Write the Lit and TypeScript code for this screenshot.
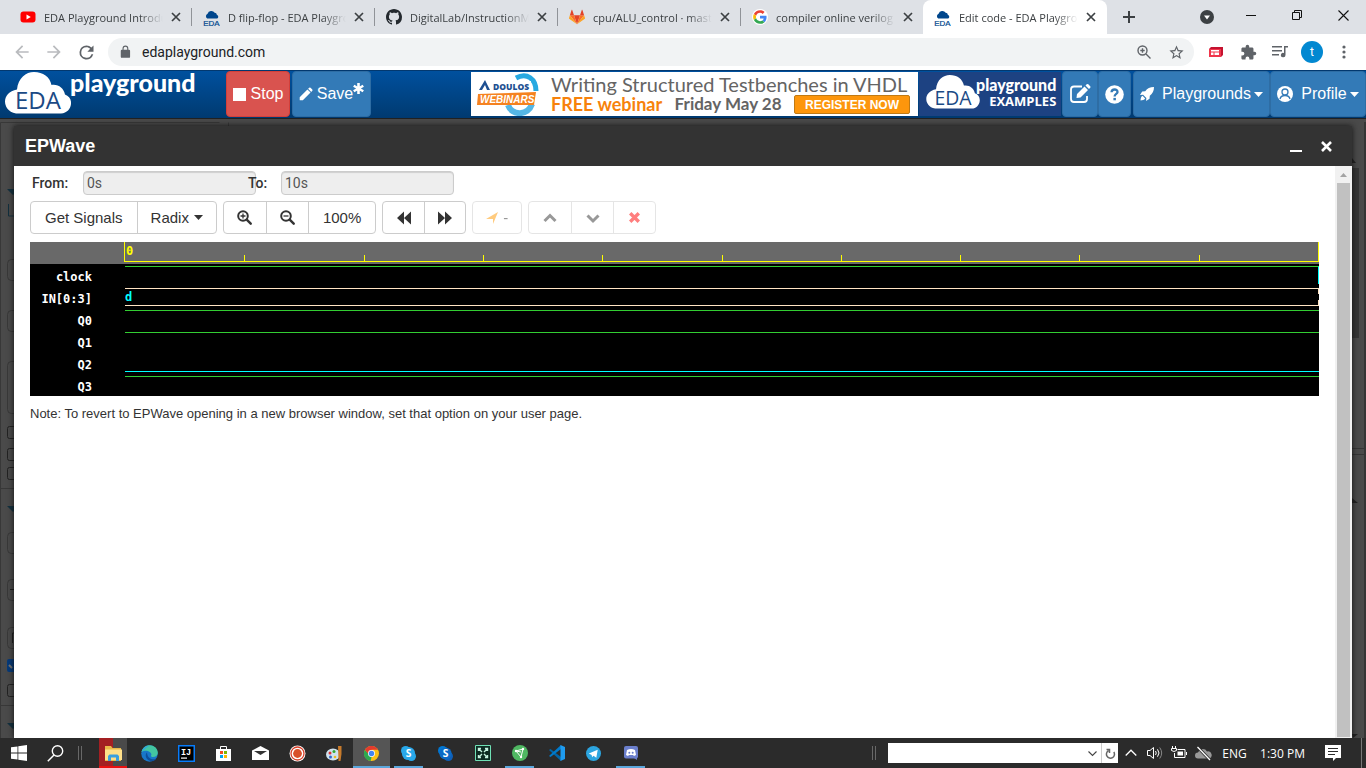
import { LitElement, html, svg, css, TemplateResult } from "lit";
import { customElement, property, state } from "lit/decorators.js";
import { classMap } from "lit/directives/class-map.js";

const icon = (size: number, box: string, body: unknown) =>
  html`<svg width=${size} height=${size} viewBox=${box} fill="currentColor" aria-hidden="true">${body}</svg>`;

const cloud = (size: number) =>
  icon(size, "0 0 16 16", svg`
    <path fill="#00468c" d="M4 9a2.6 2.6 0 0 1 .3-4.6A3.7 3.7 0 0 1 11 3.6a2 2 0 0 1 2 1.8A2 2 0 0 1 13.4 9z"/>
    <text x="8" y="16" text-anchor="middle" font-family="Liberation Sans" font-size="7.5" fill="#00468c" stroke="#00468c" stroke-width=".2">EDA</text>`);

const favicons: Record<string, TemplateResult> = {
  youtube: icon(16, "0 0 16 16", svg`<rect x="0.5" y="2.5" width="15" height="11" rx="3" fill="#f00"/><path fill="#fff" d="M6.5 5.5v5L10.8 8z"/>`),
  eda: cloud(17),
  github: icon(16, "0 0 16 16", svg`<path fill="#24292e" d="M8 0C3.58 0 0 3.58 0 8c0 3.54 2.29 6.53 5.47 7.59.4.07.55-.17.55-.38 0-.19-.01-.82-.01-1.49-2.01.37-2.53-.49-2.69-.94-.09-.23-.48-.94-.82-1.13-.28-.15-.68-.52-.01-.53.63-.01 1.08.58 1.23.82.72 1.21 1.87.87 2.33.66.07-.52.28-.87.51-1.07-1.78-.2-3.64-.89-3.64-3.95 0-.87.31-1.59.82-2.15-.08-.2-.36-1.02.08-2.12 0 0 .67-.21 2.2.82.64-.18 1.32-.27 2-.27s1.36.09 2 .27c1.53-1.04 2.2-.82 2.2-.82.44 1.1.16 1.92.08 2.12.51.56.82 1.27.82 2.15 0 3.07-1.87 3.75-3.65 3.95.29.25.54.73.54 1.48v2.2c0 .21.15.46.55.38A8.01 8.01 0 0 0 16 8c0-4.42-3.58-8-8-8z"/>`),
  gitlab: icon(16, "0 0 16 16", svg`
    <path fill="#e24329" d="M8 15.2 11 6.2H5z"/><path fill="#fc6d26" d="M8 15.2 5 6.2H.9zM8 15.2l3-9h4.1z"/>
    <path fill="#fca326" d="M.9 6.2 0 9c-.1.3 0 .6.2.7L8 15.2zM15.1 6.2 16 9c.1.3 0 .6-.2.7L8 15.2z"/>
    <path fill="#e24329" d="M.9 6.2H5L3.2 1c-.1-.3-.5-.3-.6 0zM15.1 6.2H11L12.8 1c.1-.3.5-.3.6 0z"/>`),
  google: icon(16, "-4 -4 56 56", svg`<circle cx="24" cy="24" r="28" fill="#fff"/>
    <path fill="#EA4335" d="M24 9.5c3.54 0 6.71 1.22 9.21 3.6l6.85-6.85C35.9 2.38 30.47 0 24 0 14.62 0 6.51 5.38 2.56 13.22l7.98 6.19C12.43 13.72 17.74 9.5 24 9.5z"/>
    <path fill="#4285F4" d="M46.98 24.55c0-1.57-.15-3.09-.38-4.55H24v9.02h12.94c-.58 2.96-2.26 5.48-4.78 7.18l7.73 6c4.51-4.18 7.09-10.36 7.09-17.65z"/>
    <path fill="#FBBC05" d="M10.53 28.59A14.5 14.5 0 0 1 9.77 24c0-1.6.27-3.14.76-4.59l-7.98-6.19A23.9 23.9 0 0 0 0 24c0 3.88.92 7.54 2.56 10.78z"/>
    <path fill="#34A853" d="M24 48c6.48 0 11.93-2.13 15.89-5.81l-7.73-6c-2.15 1.45-4.92 2.3-8.16 2.3-6.26 0-11.57-4.22-13.47-9.91l-7.98 6.19C6.51 42.62 14.62 48 24 48z"/>`),
};

const closeGlyph = icon(10, "0 0 10 10", svg`<path d="M1 1l8 8M9 1l-8 8" stroke="currentColor" stroke-width="1.7" fill="none"/>`);
const caret = html`<svg width="9" height="5" viewBox="0 0 9 5" fill="currentColor" aria-hidden="true"><path d="M0 0h9L4.500 5z"/></svg>`;

const magnifier = (sign: unknown) =>
  icon(15, "0 0 15 15", svg`<circle cx="6" cy="6" r="4.800" fill="none" stroke="currentColor" stroke-width="2"/>
    <path d="M9.700 9.700l4 4" stroke="currentColor" stroke-width="2.400" stroke-linecap="round"/>${sign}`);

const logoCloud = (w: number, h: number) => html`
  <svg width=${w} height=${h} viewBox="0 0 66 42" aria-hidden="true">
    <path fill="#fff" d="M11 41.500C3 40 0 34 0 29.500 0 24 4 19 12 17.500 13 6 21 0 29 0c9 0 16 5 17.500 13 7-1 12 3 13.500 9.500 4 1.500 6.500 5 6 9.500-.5 5-4 9-10 9.500z"/>
    <text x="33" y="37" text-anchor="middle" font-family="Open Sans" font-size="24" fill="#1b4a85">EDA</text>
  </svg>`;

@customElement("browser-tabs")
class BrowserTabs extends LitElement {
  @state() tabs = [
    ["youtube", "EDA Playground Introduction"],
    ["eda", "D flip-flop - EDA Playground"],
    ["github", "DigitalLab/InstructionMemory"],
    ["gitlab", "cpu/ALU_control · master"],
    ["google", "compiler online verilog - Google"],
    ["eda", "Edit code - EDA Playground"],
  ];
  @property({ type: Number }) active = 5;

  static styles = css`
    :host { display: flex; height: 34px; padding-left: 9px; background: #dee1e6; color: #3c4043; font: 11px "Open Sans", sans-serif; }
    button { all: unset; display: grid; place-items: center; }
    .tab { display: flex; align-items: center; box-sizing: border-box; width: 183px; height: 18px; margin-top: 8px; padding: 0 10px 0 11px; border-right: 1px solid #909398; }
    .tab.before, .tab.active { border-color: transparent; }
    .tab.active { width: 184px; height: 34px; margin: 0 0 0 -1px; padding-right: 11px; border: 0; border-radius: 8px 8px 0 0; background: #fff; }
    .title { flex: 1; margin: 0 8px; overflow: hidden; white-space: nowrap;
      -webkit-mask: linear-gradient(90deg, #000 80%, transparent); mask: linear-gradient(90deg, #000 80%, transparent); }
    .label { flex: none; display: flex; }
    .new { width: 44px; height: 34px; }
    .window { display: flex; margin-left: auto; color: #111; }
    .window button { width: 46px; height: 30px; }
    .window .search { color: #3c4043; height: 34px; width: 42px; }
  `;

  render() {
    return html`
      ${this.tabs.map(([kind, title], i) => html`
        <div class=${classMap({ tab: true, active: i === this.active, before: i === this.active - 1 })}>
          <span class="label">${favicons[kind]}</span>
          <span class="title">${title}</span>
          <button aria-label="Close tab">${closeGlyph}</button>
        </div>`)}
      <button class="new" aria-label="New tab">${icon(12, "0 0 12 12", svg`<path d="M5 0h2v5h5v2H7v5H5V7H0V5h5z"/>`)}</button>
      <div class="window">
        <button class="search" aria-label="Search tabs">${icon(14, "0 0 14 14", svg`<circle cx="7" cy="7" r="7"/><path fill="#fff" d="M4 5.500h6L7 9.500z"/>`)}</button>
        <button aria-label="Minimize">${icon(10, "0 0 10 10", svg`<path d="M0 5h10v1H0z"/>`)}</button>
        <button aria-label="Restore">${icon(10, "0 0 10 10", svg`<path fill="none" stroke="#111" d="M.5 2.500h7v7h-7zM2.500 2.500v-2h7v7h-2"/>`)}</button>
        <button aria-label="Close">${icon(11, "0 0 11 11", svg`<path stroke="#111" stroke-width="1.100" d="M.5.5l10 10M10.500.5l-10 10"/>`)}</button>
      </div>`;
  }
}

@customElement("browser-toolbar")
class BrowserToolbar extends LitElement {
  static styles = css`
    :host { display: flex; align-items: center; height: 36px; padding: 0 6px; background: #fff; color: #5f6368; }
    button { all: unset; display: grid; place-items: center; width: 32px; height: 28px; }
    .off { color: #b9bbbe; }
    .address { flex: 1; display: flex; align-items: center; height: 28px; margin: 0 6px; padding: 0 2px 0 11px; border-radius: 14px; background: #f1f3f4; }
    .address svg { flex: none; }
    input { flex: 1; min-width: 0; margin-left: 9px; border: 0; padding: 0; background: none; outline: 0; color: #202124; font: 14px Roboto, sans-serif; }
    .avatar span { display: grid; place-items: center; width: 22px; height: 22px; border-radius: 50%; background: #0288d1; color: #fff; font: 12px Roboto, sans-serif; }
  `;
  render() {
    return html`
      <button class="off" aria-label="Back">${icon(20, "0 0 24 24", svg`<path d="M20 11H7.830l5.590-5.590L12 4l-8 8 8 8 1.410-1.410L7.830 13H20z"/>`)}</button>
      <button class="off" aria-label="Forward">${icon(20, "0 0 24 24", svg`<path d="M4 11h12.170l-5.590-5.590L12 4l8 8-8 8-1.410-1.410L16.170 13H4z"/>`)}</button>
      <button aria-label="Reload">${icon(21, "0 0 24 24", svg`<path d="M17.650 6.350A7.960 7.960 0 0 0 12 4a8 8 0 1 0 7.730 10h-2.080A6 6 0 1 1 12 6c1.660 0 3.140.69 4.220 1.780L13 11h7V4z"/>`)}</button>
      <div class="address">
        ${icon(14, "1 0 24 24", svg`<path d="M18 8h-1V6A5 5 0 0 0 7 6v2H6a2 2 0 0 0-2 2v10a2 2 0 0 0 2 2h12a2 2 0 0 0 2-2V10a2 2 0 0 0-2-2zM8.900 8V6a3.100 3.100 0 0 1 6.200 0v2z"/>`)}
        <input aria-label="Address" value="edaplayground.com" />
        <button aria-label="Zoom">${icon(14, "0 0 14 14", svg`<g fill="none" stroke="currentColor" stroke-width="1.400"><circle cx="5.500" cy="5.500" r="4.500"/><path d="M9 9l4.500 4.500M3.300 5.500h4.400M5.500 3.300v4.400"/></g>`)}</button>
        <button aria-label="Bookmark">${icon(17, "0 0 24 24", svg`<path fill-rule="evenodd" d="M22 9.240l-7.190-.62L12 2 9.190 8.630 2 9.240l5.460 4.730L5.820 21 12 17.270 18.180 21l-1.630-7.030zM12 15.400l-3.760 2.270 1-4.280-3.320-2.880 4.380-.38L12 6.100l1.710 4.040 4.380.38-3.320 2.880 1 4.280z"/>`)}</button>
      </div>
      <button aria-label="Extension">${icon(14, "0 0 14 14", svg`<path fill="#c41230" d="M0 4l2-2h12v8l-2 2H0z"/><path fill="#f0354b" d="M0 4h12v8H0z"/><path fill="#fff" d="M2 5h8v1.500H2zM2 7.500h2.500V10H2zM5.500 7.500H10V10H5.500z"/>`)}</button>
      <button aria-label="Extensions">${icon(17, "0 0 24 24", svg`<path d="M20.500 11H19V7c0-1.100-.9-2-2-2h-4V3.500a2.500 2.500 0 0 0-5 0V5H4c-1.100 0-1.990.9-1.990 2v3.800H3.500a2.700 2.700 0 0 1 0 5.400H2V20c0 1.100.9 2 2 2h3.800v-1.500a2.700 2.700 0 0 1 5.400 0V22H17c1.100 0 2-.9 2-2v-4h1.500a2.500 2.500 0 0 0 0-5z"/>`)}</button>
      <button aria-label="Media">${icon(16, "0 0 16 16", svg`<path d="M0 2h10v1.500H0zM0 6h10v1.500H0zM0 10h7v1.500H0zM12 2h4v1.500h-2.500V11a2.300 2.300 0 1 1-1.500-2.100z"/>`)}</button>
      <button class="avatar" aria-label="Account"><span>t</span></button>
      <button aria-label="Menu">${icon(14, "0 0 14 14", svg`<circle cx="7" cy="2" r="1.600"/><circle cx="7" cy="7" r="1.600"/><circle cx="7" cy="12" r="1.600"/>`)}</button>`;
  }
}

@customElement("site-header")
class SiteHeader extends LitElement {
  static styles = css`
    :host { display: flex; height: 47px; border-top: 1px solid #02386f; background: linear-gradient(#00509e, #003a70); font: 16px "Liberation Sans", Arial, sans-serif; color: #fff; }
    button { all: unset; box-sizing: border-box; display: flex; align-items: center; justify-content: center; height: 46px; border: 1px solid #2e6da4; border-radius: 4px; background: #337ab7; white-space: nowrap; }
    a { color: inherit; text-decoration: none; }
    .logo { flex: none; display: flex; align-items: flex-start; width: 221px; padding: 1px 0 0 5px; box-sizing: content-box; }
    .logo span { margin: -5px 0 0 -1px; font: 900 25px/30px Lato, sans-serif; }
    .stop { width: 64px; gap: 5px; margin-right: 2px; border-color: #d43f3a; background: #d9534f; }
    .stop i { width: 13px; height: 13px; background: #fff; }
    .save { width: 79px; gap: 4px; }
    .save sup { display: flex; align-self: flex-start; margin: 11px 0 0 -4px; }
    .banner { flex: none; display: flex; box-sizing: border-box; width: 447px; height: 44px; margin: 1px 1px 0 auto; padding-left: 4px; background: #fff; color: #646464; white-space: nowrap; }
    .copy { margin-left: 10px; }
    .line { display: flex; justify-content: space-between; height: 23px; width: 359px; font: 20px/24px Lato, sans-serif; }
    .line.sub { height: 20px; font: bold 17px/18px Lato, sans-serif; }
    .free { color: #f7820b; font-size: 18px; }
    .register { box-sizing: border-box; height: 19px; padding: 0 10px; border: 1px solid #c07a14; border-radius: 2px; background: #fd960c; color: #fff; font: bold 12px/18px "Liberation Sans", sans-serif; }
    .examples { flex: none; display: flex; align-items: center; box-sizing: border-box; width: 142px; height: 44px; margin: 1px 1px 0 0; padding-left: 7px; background: #1d4282; }
    .examples svg { flex: none; margin-top: -4px; }
    .examples div { margin: -4px 0 0 -4px; text-align: right; font: 900 16px/18px Lato, sans-serif; }
    .examples .small { margin: 0; font: bold 13px/15px "Open Sans", sans-serif; }
    .edit { width: 36px; } .help { width: 33px; margin-right: 2px; }
    .play { width: 137px; }
    .profile { width: 96px; }
    .play span, .profile span { margin: 0 3px 0 8px; }
  `;
  render() {
    return html`
      <a class="logo" href="#">${logoCloud(66, 42)}<span>playground</span></a>
      <button class="stop"><i></i>Stop</button>
      <button class="save">${icon(14, "2 2 20 20", svg`<path d="M3 16.500V21h4.500L18.500 10l-4.500-4.500zM21 7.400a1.400 1.400 0 0 0 0-1.900L18.500 3a1.400 1.400 0 0 0-1.900 0l-1.600 1.600 4.500 4.500z"/>`)}Save<sup>${icon(11, "0 0 12 12", svg`<path d="M6 0v12M.8 3l10.400 6M11.200 3L.8 9" stroke="#fff" stroke-width="2.800"/>`)}</sup></button>
      <a class="banner" href="#">
        <svg width="66" height="44" viewBox="0 0 66 44">
          <path d="M41 6C52 0 61 7 61 19" fill="none" stroke="#27a9e1" stroke-width="5"/>
          <path d="M33 33c4 11 20 11 24-1" fill="none" stroke="#55b7e6" stroke-width="6"/>
          <path fill="#fff" d="M3 9h53v11H3z"/><path fill="#1d4f91" d="M4 18l6-10 5 10h-3l-2-5-3 5z"/>
          <text x="18" y="18" font-family="Open Sans" font-weight="800" font-size="8.500" fill="#1d4f91">DOULOS</text>
          <path fill="#f58220" d="M3 22l58-2-2 13-57 0z"/>
          <text x="5" y="31" font-family="Liberation Sans" font-weight="bold" font-style="italic" font-size="10" fill="#fff">WEBINARS</text>
        </svg>
        <div class="copy">
          <div class="line">Writing Structured Testbenches in VHDL</div>
          <div class="line sub"><span class="free">FREE webinar</span><span>Friday May 28</span><span class="register">REGISTER NOW</span></div>
        </div>
      </a>
      <a class="examples" href="#">${logoCloud(54, 34)}<div>playground<div class="small">EXAMPLES</div></div></a>
      <button class="edit" aria-label="Edit">${icon(22, "0 0 22 22", svg`<path d="M13 3.500H5A3 3 0 0 0 2 6.500V16a3 3 0 0 0 3 3h10a3 3 0 0 0 3-3v-3" fill="none" stroke="#fff" stroke-width="1.800"/><path d="M8 11l7.500-7.500 3.500 3.500-7.500 7.500L7.500 15zM16.500 2.500l1.200-1.200q.8-.8 1.600 0l1.900 1.900q.8.8 0 1.600L20 6z"/>`)}</button>
      <button class="help" aria-label="Help">${icon(19, "0 0 19 19", svg`<circle cx="9.500" cy="9.500" r="9.300"/><path d="M6.500 7.300C6.700 3.500 12.700 3.600 12.500 7.200 12.400 9 9.600 9 9.600 11.500" fill="none" stroke="#337ab7" stroke-width="2.300"/><path fill="#337ab7" d="M8.400 12.900h2.500v2.400H8.400z"/>`)}</button>
      <button class="play">${icon(14, "0 0 15 15", svg`<path d="M15 0C10.500 0 8 1.500 5.600 4.500L2.300 4.800 0 8.500l3.300-.3L6.800 11.700 6.500 15l3.700-2.300.3-3.300C13.500 7 15 4.500 15 0zM2.700 9.500C1 10.500.7 12.500.6 14.400c1.900-.1 3.900-.4 4.900-2.100z"/>`)}<span>Playgrounds</span>${caret}</button>
      <button class="profile">${icon(16, "0 0 16 16", svg`<circle cx="8" cy="8" r="8"/><circle cx="8" cy="6" r="3" fill="none" stroke="#337ab7" stroke-width="1.300"/><path d="M3 13c.5-2.500 2-3.500 5-3.500s4.500 1 5 3.500" fill="none" stroke="#337ab7" stroke-width="1.300"/>`)}<span>Profile</span>${caret}</button>`;
  }
}

interface Signal { name: string; shape: string; value?: string }

@customElement("wave-view")
class WaveView extends LitElement {
  @state() signals: Signal[] = [
    { name: "clock", shape: "high clock" },
    { name: "IN[0:3]", shape: "bus", value: "d" },
    { name: "Q0", shape: "high" },
    { name: "Q1", shape: "high" },
    { name: "Q2", shape: "low" },
    { name: "Q3", shape: "high" },
  ];
  static styles = css`
    :host { display: block; background: #000; color: #fff; font: bold 12px/22px "DejaVu Sans Mono", monospace; }
    .ruler { height: 22px; padding-left: 94px; background: #696969; }
    .scale { display: grid; grid-template-columns: repeat(10, 1fr); box-sizing: border-box; height: 20px; border: solid #ff0; border-width: 0 1px 1px; color: #ff0; line-height: 18px; }
    .tick { align-self: end; height: 6px; border-left: 1px solid #ff0; }
    .tick.zero { align-self: stretch; height: auto; padding-left: 1px; border: 0; }
    .row { display: grid; grid-template-columns: 95px 1fr; height: 22px; }
    .name { padding: 3px 33px 0 0; text-align: right; line-height: 20px; }
    .wave { box-sizing: border-box; height: 18px; margin-top: 2px; line-height: 16px; color: #0ff; }
    .high { border-top: 1px solid #32cd32; }
    .low { border-bottom: 1px solid #0ff; }
    .clock { border-right: 1px solid #0ff; }
    .bus { border: solid #ffe4c4; border-width: 1px 0; background: linear-gradient(#ffe4c4 5px, transparent 5px 11px, #ffe4c4 11px) right / 1px 100% no-repeat; }
  `;
  render() {
    return html`
      <div class="ruler"><div class="scale">
        <span class="tick zero">0</span>${Array.from({ length: 9 }, () => html`<span class="tick"></span>`)}
      </div></div>
      ${this.signals.map((s) => html`<div class="row"><div class="name">${s.name}</div><div class="wave ${s.shape}">${s.value ?? ""}</div></div>`)}`;
  }
}

@customElement("wave-dialog")
class WaveDialog extends LitElement {
  static styles = css`
    :host { position: relative; display: flex; flex-direction: column; flex: 1; min-width: 0; background: #fff; box-shadow: 0 0 6px #111; color: #333; font: 15px "Liberation Sans", Arial, sans-serif; }
    button { all: unset; display: flex; align-items: center; justify-content: center; box-sizing: border-box; }
    header { display: flex; align-items: center; height: 40px; padding: 0 16px 0 11px; background: #333; color: #fff; }
    h1 { flex: 1; margin: 0; font-size: 18px; }
    header button { width: 20px; height: 20px; margin-left: 10px; }
    .body { flex: 1; display: flex; min-height: 0; }
    .content { flex: 1; min-width: 0; padding: 5px 16px 0; }
    .range { display: flex; align-items: center; font: 500 14px Roboto, sans-serif; }
    label { width: 53px; box-sizing: border-box; padding-left: 2px; }
    label.to { position: relative; width: 35px; margin-left: -10px; }
    input { box-sizing: border-box; width: 173px; height: 24px; padding: 0 3px; border: 1px solid #ccc; border-radius: 4px; background: #eee; box-shadow: inset 0 1px 1px #0002; color: #555; font: 14px Roboto, sans-serif; }
    .tools { display: flex; gap: 6px; margin: 6px 0 8px; }
    .group { display: flex; box-sizing: border-box; height: 33px; border: 1px solid #ccc; border-radius: 4px; }
    .group button { gap: 5px; padding: 0 13px; }
    .group .wide { padding: 0 14px; }
    .group button + button { border-left: 1px solid #ccc; }
    .group .square { width: 42px; padding: 0; }
    .group .step { width: 41px; padding: 0; }
    .group.off { opacity: .5; }
    p { margin: 10px 0 0; font-size: 13px; line-height: 16px; }
    .scrollbar { display: flex; flex-direction: column; align-items: center; gap: 2px; width: 17px; background: #f1f1f1; color: #a3a3a3; }
    .scrollbar svg { margin-top: 7px; }
    .thumb { flex: 1; width: 13px; margin: 4px 0 1px; background: #c1c1c1; }
  `;
  render() {
    const double = svg`<path d="M7 0v13L0 6.500zM14 0v13L7 6.500z"/>`;
    return html`
      <header>
        <h1>EPWave</h1>
        <button aria-label="Minimize">${icon(12, "0 0 12 12", svg`<path d="M0 10h12v2H0z"/>`)}</button>
        <button aria-label="Close">${icon(11, "0 0 11 11", svg`<path d="M1 1l9 9M10 1l-9 9" stroke="#fff" stroke-width="2.600"/>`)}</button>
      </header>
      <div class="body">
        <div class="content">
          <div class="range">
            <label for="from">From:</label><input id="from" value="0s" readonly />
            <label class="to" for="to">To:</label><input id="to" value="10s" readonly />
          </div>
          <div class="tools">
            <div class="group"><button class="wide">Get Signals</button><button>Radix ${caret}</button></div>
            <div class="group">
              <button class="square" aria-label="Zoom in">${magnifier(svg`<path d="M3.500 6h5M6 3.500v5" stroke="currentColor" stroke-width="1.300"/>`)}</button>
              <button class="square" aria-label="Zoom out">${magnifier(svg`<path d="M3.500 6h5" stroke="currentColor" stroke-width="1.300"/>`)}</button>
              <button class="wide">100%</button>
            </div>
            <div class="group">
              <button class="step" aria-label="Previous">${icon(14, "0 0 14 13", double)}</button>
              <button class="step" aria-label="Next">${icon(14, "0 0 14 13", svg`<g transform="matrix(-1 0 0 1 14 0)">${double}</g>`)}</button>
            </div>
            <div class="group off"><button disabled>${icon(12, "0 0 12 12", svg`<path fill="#ff9800" d="M12 0L7 12V7H0z"/>`)}-</button></div>
            <div class="group off">
              <button class="square" disabled aria-label="Up">${icon(14, "0 0 14 14", svg`<path d="M1.500 10L7 4.500l5.500 5.500" fill="none" stroke="currentColor" stroke-width="3"/>`)}</button>
              <button class="square" disabled aria-label="Down">${icon(14, "0 0 14 14", svg`<path d="M1.500 4.500L7 10l5.500-5.500" fill="none" stroke="currentColor" stroke-width="3"/>`)}</button>
              <button class="square" disabled aria-label="Remove">${icon(11, "0 0 11 11", svg`<path d="M1.200 1.200l8.600 8.600M9.800 1.200L1.200 9.800" stroke="red" stroke-width="3.400"/>`)}</button>
            </div>
          </div>
          <wave-view></wave-view>
          <p>Note: To revert to EPWave opening in a new browser window, set that option on your user page.</p>
        </div>
        <div class="scrollbar"><svg width="7" height="4" viewBox="0 0 7 4" fill="currentColor"><path d="M3.500 0L7 4H0z"/></svg><div class="thumb"></div></div>
      </div>`;
  }
}

const apps: [string, TemplateResult, string?][] = [
  ["File Explorer", icon(17, "0 0 17 17", svg`<path fill="#e9b949" d="M0 1h6l1.500 2H16v13H0z"/><path fill="#ffe08a" d="M0 4.500h17V15H0z"/><path fill="#3aa0e0" d="M3 16v-5l1.500-1.500h8L14 11v5h-3v-3.500H6V16z"/>`), "files"],
  ["Edge", icon(17, "0 0 17 17", svg`<circle cx="8.500" cy="8.500" r="8.300" fill="#1877c9"/><path fill="#43c6a1" d="M.5 7C1.500 2.500 5 0 9 .2c4.500.2 7.800 3.500 7.800 7.500 0 3-2.600 4.600-5.600 4.300-2-.3-1-1.200-.8-2.500C10.500 6.500 4.500 4 .5 7z"/><path fill="#2fa3e6" d="M.5 7C2 2.800 5 .8 8 1.500 5 2 3 5 .5 7z"/><path fill="#0c4f9c" d="M6 7.500c-3 2.500-.5 8.500 4.500 8.700 2 0 3.800-.9 5-2.500-3 1.500-9 .8-9.500-6.200z"/>`)],
  ["IntelliJ IDEA", icon(17, "0 0 17 17", svg`<path fill="#087cfa" d="M0 0h17v17H0z"/><path fill="#000" d="M1.500 1.500h14v14h-14z"/><path d="M3 12.500h6v1.200H3z" fill="#fff"/><text x="3" y="9.500" font-family="Liberation Mono" font-weight="bold" font-size="8.500" fill="#fff">IJ</text>`)],
  ["Store", icon(17, "0 0 17 17", svg`<path fill="none" stroke="#fff" d="M5.500 5V1.500h6V5"/><path fill="#fff" d="M1 4h15v12H1z"/><path fill="#f25022" d="M5 6h3v3H5z"/><path fill="#7fba00" d="M9 6h3v3H9z"/><path fill="#00a4ef" d="M5 10h3v3H5z"/><path fill="#ffb900" d="M9 10h3v3H9z"/>`)],
  ["Mail", icon(17, "0 0 17 17", svg`<path fill="#fff" d="M0 5.500L8.500 1 17 5.500V15H0z"/><path fill="#333" d="M2 6h13l-6.500 4z"/>`)],
  ["Recorder", icon(17, "0 0 17 17", svg`<circle cx="8.500" cy="8.500" r="8" fill="#fff"/><circle cx="8.500" cy="8.500" r="6.500" fill="none" stroke="#d8402a" stroke-width="1.300"/><circle cx="8.500" cy="8.500" r="4.400" fill="#d8502a"/>`)],
  ["Paint", icon(17, "0 0 17 17", svg`<ellipse cx="7" cy="9.500" rx="7" ry="6" fill="#cfe3ef"/><circle cx="4" cy="8" r="1.500" fill="#d33"/><circle cx="8" cy="6.500" r="1.500" fill="#3a3"/><circle cx="4.500" cy="12" r="1.500" fill="#36c"/><circle cx="9" cy="12" r="1.300" fill="#eb2"/><path fill="#c77b2c" d="M12 1h3.500v8L14.500 16h-2z"/>`)],
  ["Chrome", icon(15, "0 0 16 16", svg`<circle cx="8" cy="8" r="8" fill="#fbc116"/><path fill="#2da94f" d="M1 4l7 8-1 4A8 8 0 0 1 1 4z"/><path fill="#e33b2e" d="M1 4l4 5 3-5h7a8 8 0 0 0-14 0z"/><circle cx="8" cy="8" r="3.700" fill="#fff"/><circle cx="8" cy="8" r="2.900" fill="#4285f4"/>`), "current open"],
  ["Skype", icon(15, "0 0 16 16", svg`<circle cx="5" cy="5" r="5" fill="#28a8ea"/><circle cx="11" cy="11" r="5" fill="#28a8ea"/><circle cx="8" cy="8" r="7" fill="#28a8ea"/><text x="8" y="12" text-anchor="middle" font-family="Open Sans" font-weight="bold" font-size="11" fill="#fff">S</text>`), "open"],
  ["Skype for Business", icon(15, "0 0 16 16", svg`<circle cx="5" cy="5" r="5" fill="#0078d4"/><circle cx="11" cy="11" r="5" fill="#0f5fb8"/><circle cx="8" cy="8" r="6.500" fill="#0b6ac6"/><text x="8" y="12" text-anchor="middle" font-family="Open Sans" font-weight="bold" font-size="11" fill="#fff">S</text>`)],
  ["Wireframe", icon(16, "0 0 16 16", svg`<path fill="#0d2b22" stroke="#6fe0b5" d="M.5.5h15v15H.5z"/><path fill="none" stroke="#c4f0de" stroke-width="1.400" d="M3.500 3.500L7 7M12.500 3.500L9 7M3.500 12.500L7 9M12.500 12.500L9 9M3.500 6V3.500H6M10 3.500h2.500V6M3.500 10v2.500H6M10 12.500h2.500V10"/>`)],
  ["Nodes", icon(16, "0 0 16 16", svg`<circle cx="8" cy="8" r="8" fill="#4fb862"/><path d="M4 6l7-2-2 8zM4 6l5 1" fill="none" stroke="#fff"/><circle cx="4" cy="6" r="1.200" fill="#fff"/><circle cx="11" cy="4" r="1.200" fill="#fff"/><circle cx="9" cy="12" r="1.200" fill="#fff"/>`), "open"],
  ["VS Code", icon(16, "0 0 16 16", svg`<path fill="#0065a9" d="M0 5l1.500-1L12 12v4z"/><path fill="#007acc" d="M0 11l1.500 1L12 4V0z"/><path fill="#1f9cf0" d="M11.500 0L16 2v12l-4.500 2z"/>`)],
  ["Telegram", icon(15, "0 0 16 16", svg`<circle cx="8" cy="8" r="8" fill="#2ca5e0"/><path fill="#fff" d="M3 8l9.500-4-1.500 8.500-3-2-1.500 1.500L6 9.500z"/>`)],
  ["Discord", icon(14, "0 0 14 14", svg`<rect width="14" height="12.500" rx="2" fill="#6b7fcc"/><path fill="#6b7fcc" d="M10 12h3v2z"/><path fill="#fff" d="M3 4q4-2 8 0l1 5-2 1-1-1H5l-1 1-2-1z"/><circle cx="5.300" cy="6.700" r="1" fill="#6b7fcc"/><circle cx="8.700" cy="6.700" r="1" fill="#6b7fcc"/>`), "open"],
];

@customElement("task-bar")
class TaskBar extends LitElement {
  static styles = css`
    :host { position: relative; display: flex; height: 30px; background: #2b2b2b; color: #fff; font: 12px "Open Sans", sans-serif; }
    button { all: unset; display: flex; align-items: center; justify-content: center; box-sizing: border-box; width: 37px; height: 30px; flex: none; }
    .grip { width: 2px; height: 14px; margin: 8px 12px 0 4px; border: solid #686868; border-width: 0 1px; }
    .open { border-bottom: 2px solid #5ba7dc; width: 29px; margin: 0 4px; padding-top: 2px; }
    .current { width: 37px; margin: 0; background: #555; }
    .files { width: 28px; margin: 0 4px 0 5px; background: linear-gradient(90deg, #a31f22 50%, #4a4a4a 50%); border-bottom: 2px solid #e81010; padding-top: 2px; }
    .right { display: flex; align-items: center; margin-left: auto; }
    .right .grip { margin: 0 12px 0 0; }
    .box { display: flex; align-items: center; width: 230px; height: 20px; margin-right: 1px; background: #fff; color: #555; }
    .box input { flex: 1; min-width: 0; border: 0; padding: 0 4px; outline: 0; background: none; }
    .box button { width: 17px; height: 20px; }
    .box button + button { border-left: 1px solid #ccc; }
    .right > button { width: 24px; }
    .right > .lang { width: 31px; margin-left: 4px; } .right > .clock { width: 65px; } .right > .notes { width: 36px; }
    .edge { width: 5px; height: 30px; border-left: 1px solid #777; margin-left: 10px; box-sizing: border-box; }
  `;
  render() {
    return html`
      <button aria-label="Start">${icon(16, "0 0 16 16", svg`<path d="M0 2.300L6.500 1.400v6.200H0zM7.300 1.300L16 0v7.600H7.300zM0 8.400h6.500v6.200L0 13.700zM7.300 8.400H16V16l-8.700-1.300z"/>`)}</button>
      <button aria-label="Search">${icon(17, "0 0 17 17", svg`<circle cx="10.500" cy="6" r="5.200" fill="none" stroke="#fff" stroke-width="1.400"/><path d="M7 10L.8 16.200" stroke="#fff" stroke-width="1.500"/>`)}</button>
      <span class="grip"></span>
      ${apps.map(([name, glyph, cls]) => html`<button class=${cls ?? ""} aria-label=${name}>${glyph}</button>`)}
      <div class="right">
        <span class="grip"></span>
        <div class="box">
          <input aria-label="Address toolbar" />
          <button aria-label="Show list">${icon(9, "0 0 9 9", svg`<path d="M.5 2.500l4 4 4-4" fill="none" stroke="#444" stroke-width="1.100"/>`)}</button>
          <button aria-label="Refresh">${icon(11, "0 0 11 11", svg`<path d="M3.500 2.700A4 4 0 1 0 8.800 4M1.500 1.500h3v3.500" fill="none" stroke="#666" stroke-width="1.500"/>`)}</button>
        </div>
        <button aria-label="Hidden icons">${icon(12, "0 0 12 12", svg`<path d="M.7 8.500L6 3.200l5.300 5.300" fill="none" stroke="#fff" stroke-width="1.300"/>`)}</button>
        <button aria-label="Volume">${icon(16, "0 0 16 16", svg`<g fill="none" stroke="#fff"><path d="M.5 5.500h2.500L6.500 2.500v11L3 10.500H.5zM8.500 6q1.500 2 0 4M10.500 4.300q3 3.700 0 7.400"/><path stroke="#888" d="M12.700 2.500q4 5.500 0 11"/></g>`)}</button>
        <button aria-label="Battery">${icon(16, "0 0 16 16", svg`<g fill="none" stroke="#fff"><path d="M6.500 4.500H14v8H3.500V8M15.500 7v3M1.500 1v2M4.500 1v2M.5 3.500h5v2q-2.500 2-5 0z"/></g><path fill="#fff" d="M6.500 6.500H12v4H6.500z"/>`)}</button>
        <button aria-label="Cloud sync">${icon(17, "0 0 17 17", svg`<path fill="#999" d="M3 13.500a3 3 0 0 1 0-6 5 5 0 0 1 9-1 3.600 3.600 0 0 1 2 7z"/><path d="M2.500 2l12.500 13" stroke="#2b2b2b" stroke-width="3"/><path d="M2.500 2l12.500 13" stroke="#fff" stroke-width="1.300"/>`)}</button>
        <button class="lang">ENG</button>
        <button class="clock">1:30 PM</button>
        <button class="notes" aria-label="Notifications">${icon(16, "0 0 16 16", svg`<path d="M0 0h16v13h-5l-3 3v-3H0z"/><path stroke="#2b2b2b" d="M3 3.500h10M3 6.500h10M3 9.500h7"/>`)}</button>
        <span class="edge"></span>
      </div>`;
  }
}

@customElement("app-root")
class AppRoot extends LitElement {
  static styles = css`
    :host { display: flex; flex-direction: column; height: 100vh; overflow: hidden; }
    browser-tabs, browser-toolbar, site-header, task-bar { flex: none; }
    main { position: relative; flex: 1; display: flex; min-height: 0; padding: 7px 14px 0; background: #4a4a4a; border-top: 1px solid #222; box-sizing: border-box; }
    .backdrop { position: absolute; top: -1px; }
    .left { left: 0; } .right { right: 0; }
  `;
  render() {
    const boxes = [[141, 21], [192, 21], [243, 52], [414, 21], [461, 21], [509, 21]];
    const checks = [308, 330, 349, 566];
    return html`
      <browser-tabs></browser-tabs>
      <browser-toolbar></browser-toolbar>
      <site-header></site-header>
      <main>
        <svg class="backdrop left" width="230" height="620" fill="none" stroke="#383838" aria-hidden="true">
          <path d="M.5 620V4.500h219M228.500 8V4.500"/><path d="M1 370.500h13M1 587.500h13"/>
          ${boxes.map(([y, h]) => svg`<rect x="7.500" y=${y + 0.5} width="20" height=${h} rx="4"/>`)}
          ${checks.map((y) => svg`<rect x="7.500" y=${y + 0.5} width="12" height="12" rx="2" stroke="#222"/>`)}
          <rect x="7" y="541" width="13" height="13" rx="2" fill="#063a79" stroke="none"/>
          <path d="M9 547l3 3" stroke="#777" stroke-width="2"/>
          <path d="M7 71h12l-6 6zM7 388h12l-6 6zM7 605h12l-6 6z" fill="#12303f" stroke="none"/>
          <path d="M8.500 86v12h6" stroke="#12303f"/><path d="M10 471.500h5M12.500 525v-10h4" stroke="#1c1c1c"/>
        </svg>
        <svg class="backdrop right" width="14" height="620" aria-hidden="true">
          <path fill="#353535" d="M12 4h2v616h-2zM0 50h7v170H0zM0 336h12v1H0zM0 330h12v1H0z"/>
          <path fill="#222" d="M0 40l4 5H0zM0 380l6 5H0zM0 616h6l-5 4z"/>
        </svg>
        <wave-dialog role="dialog" aria-label="EPWave"></wave-dialog>
      </main>
      <task-bar></task-bar>`;
  }
}
